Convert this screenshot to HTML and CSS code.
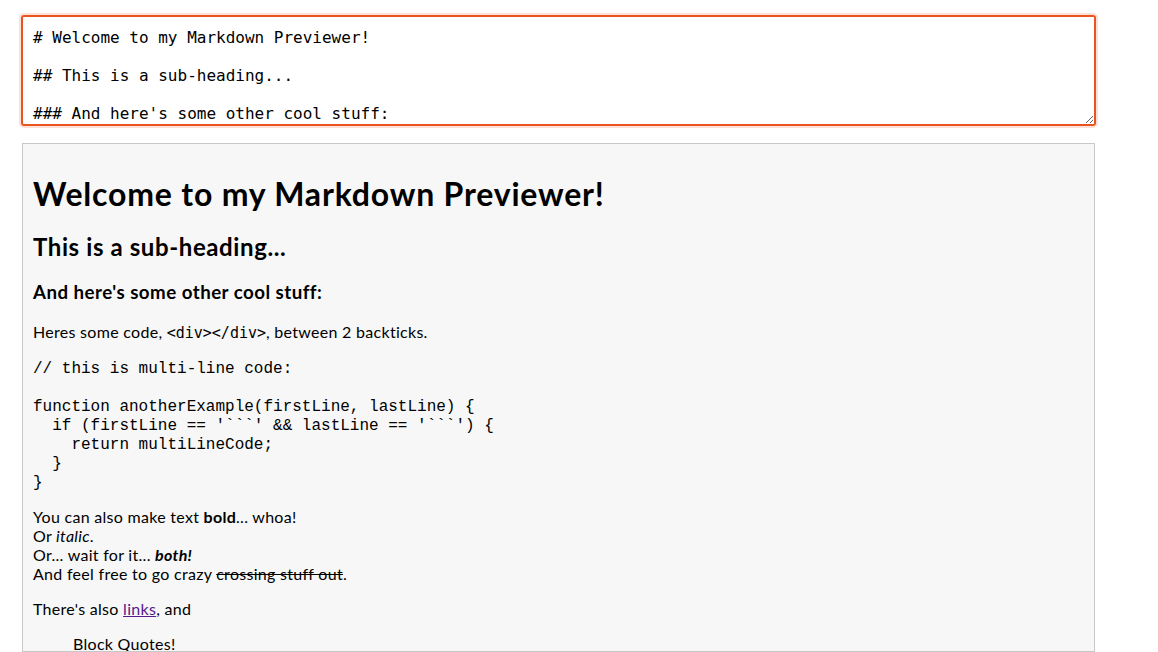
FILE: index.html
```html
<!DOCTYPE html>
<html lang="en">
<head>
<meta charset="utf-8">
<title>Markdown Previewer</title>
<link rel="stylesheet" href="styles.css">
</head>
<body>
<div class="app">
<textarea class="editor" autofocus spellcheck="false"># Welcome to my Markdown Previewer!

## This is a sub-heading...

### And here's some other cool stuff:

Heres some code, `&lt;div&gt;&lt;/div&gt;`, between 2 backticks.
</textarea>
<div class="preview">
<h1>Welcome to my Markdown Previewer!</h1>
<h2>This is a sub-heading...</h2>
<h3>And here's some other cool stuff:</h3>
<p>Heres some code, <code>&lt;div&gt;&lt;/div&gt;</code>, between 2 backticks.</p>
<pre class="block">// this is multi-line code:

function anotherExample(firstLine, lastLine) {
  if (firstLine == '```' &amp;&amp; lastLine == '```') {
    return multiLineCode;
  }
}</pre>
<p class="after-code">You can also make text <strong>bold</strong>... whoa!<br>Or <em>italic</em>.<br>Or... wait for it... <strong><em>both!</em></strong><br>And feel free to go crazy <del>crossing stuff out</del>.</p>
<p>There's also <a class="link" href="#">links</a>, and</p>
<blockquote>Block Quotes!</blockquote>
</div>
</div>
</body>
</html>
```
FILE: styles.css
```css
html, body {
  margin: 0;
  height: 100%;
  background: #fff;
}

.app {
  box-sizing: border-box;
  height: 100vh;
  width: 1073px;
  margin-left: 22px;
  padding-top: 15px;
  display: flex;
  flex-direction: column;
}

.editor {
  display: block;
  flex: none;
  box-sizing: border-box;
  width: 1075px;
  height: 111px;
  margin: 0 0 0 -1px;
  padding: 11px 10px 10px;
  border: 2px solid #e95420;
  border-radius: 3px;
  box-shadow: 0 0 0 2px #fde0d6;
  outline: none;
  font-family: "DejaVu Sans Mono", monospace;
  font-size: 16px;
  line-height: 19px;
  color: #000;
  background: #fff;
  resize: vertical;
}

.preview {
  flex: 1;
  min-height: 0;
  overflow: hidden;
  box-sizing: border-box;
  margin-top: 17px;
  padding: 10px 10px 0;
  background: #f7f7f7;
  border: 1px solid #c8c8c8;
  font-family: Lato, "Open Sans", sans-serif;
  font-size: 16px;
  line-height: 19px;
  letter-spacing: 0.018em;
  color: #000;
}

.preview h1 {
  font-size: 32px;
  line-height: 37px;
  margin: 21px 0;
  letter-spacing: 0.025em;
}

.preview h2 {
  font-size: 24px;
  line-height: 28px;
  margin: 20px 0;
  letter-spacing: 0.025em;
}

.preview h3 {
  font-size: 18.72px;
  line-height: 22px;
  margin: 19px 0;
  letter-spacing: 0.025em;
}

.preview p {
  margin: 16px 0;
}

.preview .after-code {
  margin-top: 14px;
}

.preview code {
  font-family: "DejaVu Sans Mono", monospace;
  font-size: 15px;
  line-height: 1;
  letter-spacing: 0;
}

.preview .block {
  margin: 19px 0 14px;
  font-family: "Liberation Mono", monospace;
  font-size: 16px;
  line-height: 19px;
  letter-spacing: 0;
}

.preview blockquote {
  margin: 16px 40px;
}

.link {
  color: #551a8b;
}
```
